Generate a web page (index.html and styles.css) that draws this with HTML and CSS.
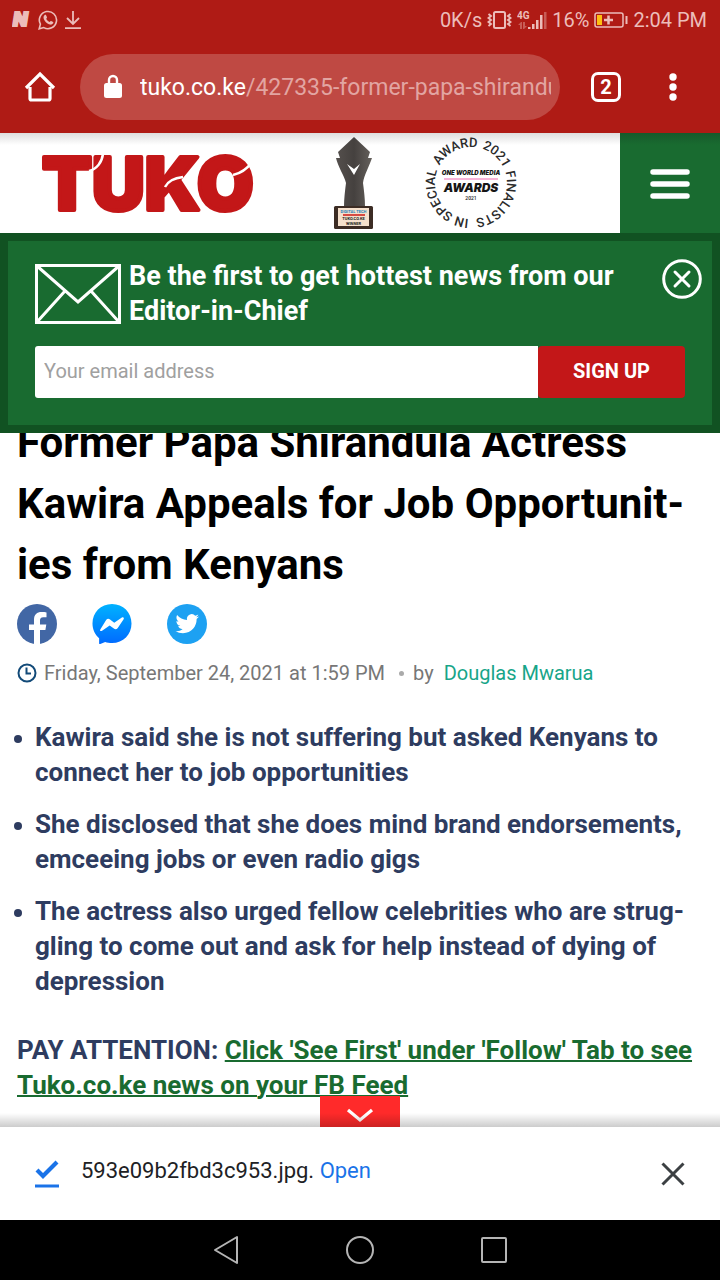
FILE: index.html
```html
<!DOCTYPE html>
<html lang="en">
<head>
<meta charset="utf-8">
<meta name="viewport" content="width=device-width, initial-scale=1">
<title>Former Papa Shirandula Actress Kawira Appeals for Job Opportunities from Kenyans</title>
<link rel="stylesheet" href="styles.css">
</head>
<body>
<div class="screen">
  <div class="status">
    <div class="status-group">
      <svg width="21" height="20" viewBox="0 0 21 20"><text class="n-mark" x="1" y="16">N</text></svg>
      <svg width="20" height="20" viewBox="0 0 20 20" fill="none" stroke="currentColor" stroke-width="1.6"><path d="M1.2 18.8l1.2-4.6A8.6 8.6 0 1 1 5.8 17.600z"/><path fill="currentColor" stroke="none" d="M6.500 5.200c.5-.6 1.300-.6 1.600 0l.9 2c.1.400-.2.900-.8 1.500.9 1.700 2 2.600 3.500 3.300.7-.9 1-1.200 1.400-1l2 1c.4.300.2 1-.2 1.600-.6.800-1.700 1.200-2.700 1-3.200-.8-6-3.500-6.600-6.400-.2-1.100.1-2.300.9-3z"/></svg>
      <svg class="saved" width="16" height="20" viewBox="0 0 16 20" fill="none" stroke="currentColor" stroke-width="1.8"><path d="M8 1v13M2 8l6 6 6-6M0 18.200h16"/></svg>
    </div>
    <div class="status-group status-right">
      <span>0K/s</span>
      <svg width="25" height="20" viewBox="0 0 25 20" fill="none" stroke="currentColor"><rect x="7" y="2" width="11" height="16" rx="1.500" stroke-width="2"/><path stroke-width="1.900" d="M1.500 4l2.500 2-2.500 2 2.500 2-2.500 2 2.500 2-2.500 2M23.500 4L21 6l2.500 2-2.500 2 2.500 2-2.500 2 2.500 2"/></svg>
      <svg width="30" height="22" viewBox="0 0 30 22"><text class="net-mark" x="0" y="10">4G</text><g fill="currentColor"><path opacity=".4" d="M4 13l-3 3h2v4h2v-7zm3 7l3-3H8v-4H6v7z"/><path d="M11 18h2.500v2H11zM15 15h2.500v5H15zM19 11h2.500v9H19zM23 6h2.500v14H23z"/><path opacity=".4" d="M27 3h2.500v17H27z"/></g></svg>
      <span>16%</span>
      <svg width="34" height="18" viewBox="0 0 34 18" fill="none" stroke="currentColor"><rect x="1" y="2" width="28" height="14" rx="2" stroke-width="1.500"/><path d="M10 9h9M14.500 4.500v9" stroke-width="2.500"/><path d="M32.500 5v8" stroke-width="2"/><path fill="#fdbf12" stroke="none" d="M3 4h5v10H3z"/></svg>
      <span>2:04 PM</span>
    </div>
  </div>

  <div class="toolbar">
    <button class="icon-btn" aria-label="Home"><svg width="32" height="32" viewBox="0 0 32 32" fill="none" stroke="currentColor" stroke-width="3.200" stroke-linejoin="round"><path d="M6 16v11.500a1.500 1.500 0 0 0 1.500 1.500h17a1.500 1.500 0 0 0 1.500-1.500V16"/><path d="M2 17L16 3l14 14" stroke-linejoin="miter"/></svg></button>
    <button class="address">
      <svg width="20" height="26" viewBox="0 0 20 26"><path d="M6 10V6a4 4 0 0 1 8 0v4" fill="none" stroke="currentColor" stroke-width="2.400"/><rect x="1" y="9" width="18" height="15" rx="2.500" fill="currentColor"/></svg>
      <span class="url">tuko.co.ke<span class="url-path">/427335-former-papa-shirandula</span></span>
    </button>
    <button class="tabs" aria-label="Open tabs">2</button>
    <button class="icon-btn" aria-label="More options"><svg width="10" height="30" viewBox="0 0 10 30" fill="currentColor"><circle cx="5" cy="5" r="3.700"/><circle cx="5" cy="15" r="3.700"/><circle cx="5" cy="25" r="3.700"/></svg></button>
  </div>

  <header class="site-header">
    <a class="logo" href="#" aria-label="Tuko home"><svg width="216" height="76" viewBox="0 0 216 76">
      <text class="logo-text" x="1" y="65">TUKO</text>
      <g fill="none" stroke="#fff" stroke-width="2.500"><path d="M62 9c-1 8-6 15-14 17M211 17c-5 7-10 11-19 13M124 42c3-6 9-9 18-10"/></g>
    </svg></a>
    <svg class="trophy" width="42" height="94" viewBox="0 0 42 94" role="img" aria-label="Digital Tech award">
      <defs><linearGradient id="metal"><stop offset="0" stop-color="#55504d"/><stop offset=".5" stop-color="#45413f"/><stop offset="1" stop-color="#65605c"/></linearGradient></defs>
      <path fill="url(#metal)" d="M21 1l16 15-2 6h4c-3 9-8 17-9 25 1 8 2 15 2 24H11c0-9 1-16 2-24C11 39 5 31 3 22h4l-2-6z"/>
      <path fill="#fff" d="M14 28l7 5 6-5-6 11z"/>
      <rect x="1" y="70" width="39" height="23" rx="1.500" fill="#3c2c24"/><rect x="5" y="72" width="31" height="18" fill="#f5e0cc"/>
      <text class="plate plate-blue" x="20.500" y="77">DIGITAL TECH</text><path d="M10 79h22" stroke="#d74a42" stroke-width="2"/>
      <text class="plate" x="20.500" y="84">TUKO.CO.KE</text><text class="plate" x="20.500" y="89">WINNER</text>
    </svg>
    <svg class="award" width="94" height="94" viewBox="0 0 94 94" role="img" aria-label="One World Media Awards 2021">
      <defs><path id="ring" d="M47 83a36 36 0 0 1 0-72a36 36 0 0 1 0 72"/></defs>
      <g class="ring-text"><text><textPath href="#ring" startOffset="8%">SPECIAL</textPath></text><text><textPath href="#ring" startOffset="33%">AWARD</textPath></text><text><textPath href="#ring" startOffset="55%">2021</textPath></text><text><textPath href="#ring" startOffset="70%">FINALISTS</textPath></text><text><textPath href="#ring" startOffset="1%">IN</textPath></text></g>
      <text class="award-small" x="47" y="39">ONE WORLD MEDIA</text>
      <path d="M20 43h54" stroke="#f49acb" stroke-width="1.500"/>
      <text class="award-big" x="47" y="56">AWARDS</text>
      <text class="award-year" x="47" y="64">2021</text>
    </svg>
    <button class="menu" aria-label="Menu"><svg width="42" height="32" viewBox="0 0 42 32" stroke="#fff" stroke-width="5.500" stroke-linecap="round"><path d="M4 5h34M4 17h34M4 29h34"/></svg></button>
  </header>

  <section class="newsletter">
    <div class="pitch">
      <svg width="86" height="60" viewBox="0 0 86 60" fill="none" stroke="#fff" stroke-width="3"><rect x="1.500" y="1.500" width="83" height="57"/><path d="M2 2l41 36L84 2M2 58l28-31M84 58L56 27"/></svg>
      <h2>Be the first to get hottest news from our Editor-in-Chief</h2>
      <button class="close-round" aria-label="Close"><svg width="40" height="40" viewBox="0 0 40 40" fill="none" stroke="#fff" stroke-width="3"><circle cx="20" cy="20" r="18.300"/><path d="M13 13l14 14M27 13L13 27" stroke-linecap="round"/></svg></button>
    </div>
    <form class="signup">
      <input type="email" aria-label="Your email address" placeholder="Your email address">
      <button type="button">SIGN UP</button>
    </form>
  </section>

  <div class="page">
    <main class="article">
      <h1>Former Papa Shirandula Actress Kawira Appeals for Job Opportunit&shy;ies from Kenyans</h1>
      <div class="share">
        <a href="#" aria-label="Facebook"><svg width="40" height="40" viewBox="0 0 40 40"><circle cx="20" cy="20" r="20" fill="#4267a5"/><path fill="#fff" d="M17 40V26h-5v-5.500h5v-4.700C17 10.500 20 8 24.500 8c2 0 4 .2 5 .4v4.900h-3.200c-2.600 0-3.300 1.300-3.300 3.200v4h6.300L28.400 26H23v14z"/></svg></a>
        <a href="#" aria-label="Messenger"><svg width="40" height="41" viewBox="0 0 41 42"><defs><linearGradient id="msg" x2="0" y2="1"><stop stop-color="#00b2ff"/><stop offset="1" stop-color="#006aff"/></linearGradient></defs><path fill="url(#msg)" d="M20.500 0C32 0 40.500 8.500 40.500 20S32 40 20.500 40c-2.500 0-5-.4-7-1.100L8.500 41c-.7.300-1.200 0-1.200-.8V35C3 31.500.5 26 .5 20 .5 8.500 9 0 20.500 0z"/><path fill="#fff" d="M8.500 26l6-9.500c1-1.500 2.500-1.700 4-.7l4.300 3.300 7.800-5.300c1.400-.8 2.700.3 1.800 1.800l-6 8.900c-1 1.400-2.500 1.800-4 .7l-4.300-3.300-7.800 5.500c-1.400.9-2.600-.2-1.800-1.400z"/></svg></a>
        <a href="#" aria-label="Twitter"><svg width="40" height="40" viewBox="0 0 40 40"><circle cx="20" cy="20" r="20" fill="#1da1f2"/><path fill="#fff" transform="translate(8.500 8) scale(.98)" d="M23.950 4.570a10 10 0 0 1-2.820.78 4.960 4.960 0 0 0 2.160-2.720c-.95.550-2 .95-3.130 1.180a4.920 4.920 0 0 0-8.380 4.480C7.690 8.090 4.070 6.130 1.640 3.160a4.820 4.820 0 0 0-.67 2.480c0 1.710.87 3.210 2.190 4.100a4.900 4.900 0 0 1-2.230-.62v.06a4.920 4.920 0 0 0 3.950 4.830 5 5 0 0 1-2.210.08 4.940 4.940 0 0 0 4.600 3.420A9.870 9.870 0 0 1 0 19.540a13.990 13.990 0 0 0 7.550 2.210c9.050 0 14-7.500 14-13.980 0-.21 0-.42-.02-.63a9.940 9.940 0 0 0 2.460-2.550z"/></svg></a>
      </div>
      <div class="meta">
        <svg width="20" height="20" viewBox="0 0 20 20" fill="none" stroke="#124a78" stroke-width="2"><circle cx="10" cy="10" r="8.500"/><path d="M9.500 4.500v6h4.500"/></svg>
        <time datetime="2021-09-24T13:59">Friday, September 24, 2021 at 1:59 PM</time>
        <i class="dot"></i>
        <span>by</span><a href="#">Douglas Mwarua</a>
      </div>
      <ul class="summary">
        <li>Kawira said she is not suffering but asked Kenyans to connect her to job opportunities</li>
        <li>She disclosed that she does mind brand endorsements, emceeing jobs or even radio gigs</li>
        <li>The actress also urged fellow celebrities who are strug&shy;gling to come out and ask for help instead of dying of depression</li>
      </ul>
      <p class="attention">PAY ATTENTION: <a href="#">Click 'See First' under 'Follow' Tab to see Tuko.co.ke news on your FB Feed</a></p>
    </main>
    <button class="expand" aria-label="Expand"><svg width="28" height="16" viewBox="0 0 28 16" fill="none" stroke="#fff" stroke-width="3.200"><path d="M2 2l12 10L26 2"/></svg></button>
  </div>

  <div class="download">
    <svg width="24" height="28" viewBox="0 0 24 28" fill="none" stroke="#1a73e8"><path d="M2 10l6 6L22 2" stroke-width="4.200"/><path d="M0 26h24" stroke-width="3"/></svg>
    <p>593e09b2fbd3c953.jpg. <a href="#">Open</a></p>
    <button class="icon-btn dark" aria-label="Dismiss"><svg width="24" height="24" viewBox="0 0 24 24" fill="none" stroke="currentColor" stroke-width="3"><path d="M1.500 1.500l21 21M22.500 1.500l-21 21"/></svg></button>
  </div>

  <nav class="system">
    <button aria-label="Back"><svg width="28" height="30" viewBox="0 0 28 30"><path d="M25 2v26L3 15z"/></svg></button>
    <button aria-label="Home screen"><svg width="30" height="30" viewBox="0 0 30 30"><circle cx="15" cy="15" r="13"/></svg></button>
    <button aria-label="Recent apps"><svg width="28" height="28" viewBox="0 0 28 28"><rect x="2" y="2" width="24" height="24" rx="1"/></svg></button>
  </nav>
</div>
</body>
</html>
```
FILE: styles.css
```css
* { box-sizing: border-box; }
body { margin: 0; font-family: Roboto, "Liberation Sans", sans-serif; color: #000; background: #fff; }
button { border: 0; padding: 0; background: none; color: inherit; font: inherit; }
svg { display: block; flex: none; }
h1, h2, p, ul { margin: 0; padding: 0; }

.screen { display: flex; flex-direction: column; height: 100vh; }

.status { display: flex; justify-content: space-between; align-items: center; height: 40px; flex: none; padding: 0 13px 0 12px; background: #af1b15; color: #ecbdba; font-size: 20px; }
.status-group { display: flex; align-items: center; gap: 5px; }
.saved { margin-left: 2px; }
.n-mark { font: italic 900 19px Inter, sans-serif; fill: currentColor; stroke: currentColor; stroke-width: 2; }
.net-mark { font: bold 10px Roboto, sans-serif; fill: currentColor; }

.toolbar { display: flex; align-items: center; height: 93px; flex: none; padding: 0 40px 0 24px; background: #af1b15; color: #fff; }
.icon-btn { display: flex; flex: none; }
.address { display: flex; align-items: center; gap: 17px; flex: 1; min-width: 0; height: 66px; margin: 0 31px 0 24px; padding: 0 9px 0 23px; border-radius: 33px; background: #bf4943; }
.url { flex: 1; overflow: hidden; white-space: nowrap; text-align: left; font-size: 23px; line-height: 32px; padding-top: 2px; }
.url-path { color: #e2a5a2; }
.tabs { flex: none; width: 30px; height: 30px; margin-right: 47px; border: 3px solid #fff; border-radius: 7px; font-size: 20px; font-weight: bold; line-height: 24px; }
.toolbar > .icon-btn:last-child { margin-right: 2px; }

.site-header { display: flex; align-items: center; height: 100px; flex: none; padding-left: 41px; background: linear-gradient(#dedede, #fff 12px); }
.logo-text { font: 900 73px Inter, sans-serif; fill: #c31718; stroke: #c31718; stroke-width: 4; stroke-linejoin: round; }
.trophy { margin-left: 76px; }
.plate { font: bold 4px Roboto, sans-serif; text-anchor: middle; fill: #222; }
.plate-blue { fill: #1d7fb9; }
.award { margin-left: 49px; }
.ring-text { font: 500 13px Roboto, sans-serif; fill: #2b2b2b; }
.award-small, .award-big, .award-year { text-anchor: middle; fill: #161616; }
.award-small { font: italic 900 6px Inter, sans-serif; }
.award-big { font: italic 900 12px Inter, sans-serif; }
.award-year { font: 500 5px Roboto, sans-serif; }
.menu { display: flex; align-items: center; justify-content: center; width: 100px; height: 100%; margin-left: auto; background: linear-gradient(#17592b, #196b30 12px); }

.newsletter { position: relative; z-index: 1; display: flex; flex-direction: column; gap: 18px; height: 200px; flex: none; padding: 18px 27px 0; border: 8px solid #115222; background: #196b30; }
.pitch { display: flex; align-items: center; gap: 8px; }
.pitch h2 { flex: 1; margin-right: -8px; color: #fff; font-size: 27px; line-height: 35px; }
.close-round { align-self: flex-start; margin-right: -17px; }
.signup { display: flex; height: 52px; margin-top: -1px; }
.signup input { flex: 1; min-width: 0; border: 0; padding: 0 9px 2px; border-radius: 3px 0 0 3px; background: #fff; font: 20px Roboto, sans-serif; }
.signup input::placeholder { color: #a0a0a0; }
.signup button { width: 147px; padding-bottom: 2px; border-radius: 4px; background: #c31718; color: #fff; font-size: 20px; font-weight: bold; }

.page { position: relative; flex: 1; min-height: 0; overflow: hidden; }
.page::after { content: ""; position: absolute; left: 0; right: 0; bottom: 0; height: 14px; background: linear-gradient(rgba(0, 0, 0, 0), rgba(0, 0, 0, .2)); }
.article { margin-top: -21px; padding: 0 17px; }
h1 { font-size: 42px; line-height: 61px; }
.share { display: flex; gap: 35px; height: 42px; margin-top: 9px; }
.meta { display: flex; align-items: center; height: 30px; margin-top: 12px; color: #777; font-size: 20px; }
.meta time { margin-left: 7px; }
.meta a { margin-left: 10px; color: #17a589; text-decoration: none; }
.dot { width: 5px; height: 5px; margin: 0 9px 0 14px; border-radius: 50%; background: #aaa; }
.summary { display: flex; flex-direction: column; gap: 17px; margin-top: 32px; padding-left: 18px; list-style: none; color: #2e3c60; font-size: 26px; font-weight: bold; line-height: 35px; }
.summary li { position: relative; }
.summary li::before { content: ""; position: absolute; left: -21px; top: 15px; width: 8px; height: 8px; border-radius: 50%; background: #2e3c60; }
.attention { margin-top: 34px; color: #2e3c60; font-size: 26px; font-weight: bold; line-height: 35px; }
.attention a { color: #196b30; text-decoration-thickness: 2px; }
.expand { position: absolute; left: 50%; bottom: 0; display: flex; align-items: center; justify-content: center; width: 80px; height: 31px; margin-left: -40px; padding-top: 8px; background: #ff2a2a; }

.download { display: flex; align-items: center; gap: 22px; height: 93px; flex: none; padding: 0 35px; background: #fff; color: #202124; font-size: 22px; }
.download p { flex: 1; padding-bottom: 6px; }
.download a { color: #1a73e8; text-decoration: none; }
.dark { color: #3c4043; }

.system { display: flex; align-items: center; justify-content: center; gap: 105px; height: 60px; flex: none; background: #000; }
.system svg { fill: none; stroke: #b5b5b5; stroke-width: 2; stroke-linejoin: round; }
```
